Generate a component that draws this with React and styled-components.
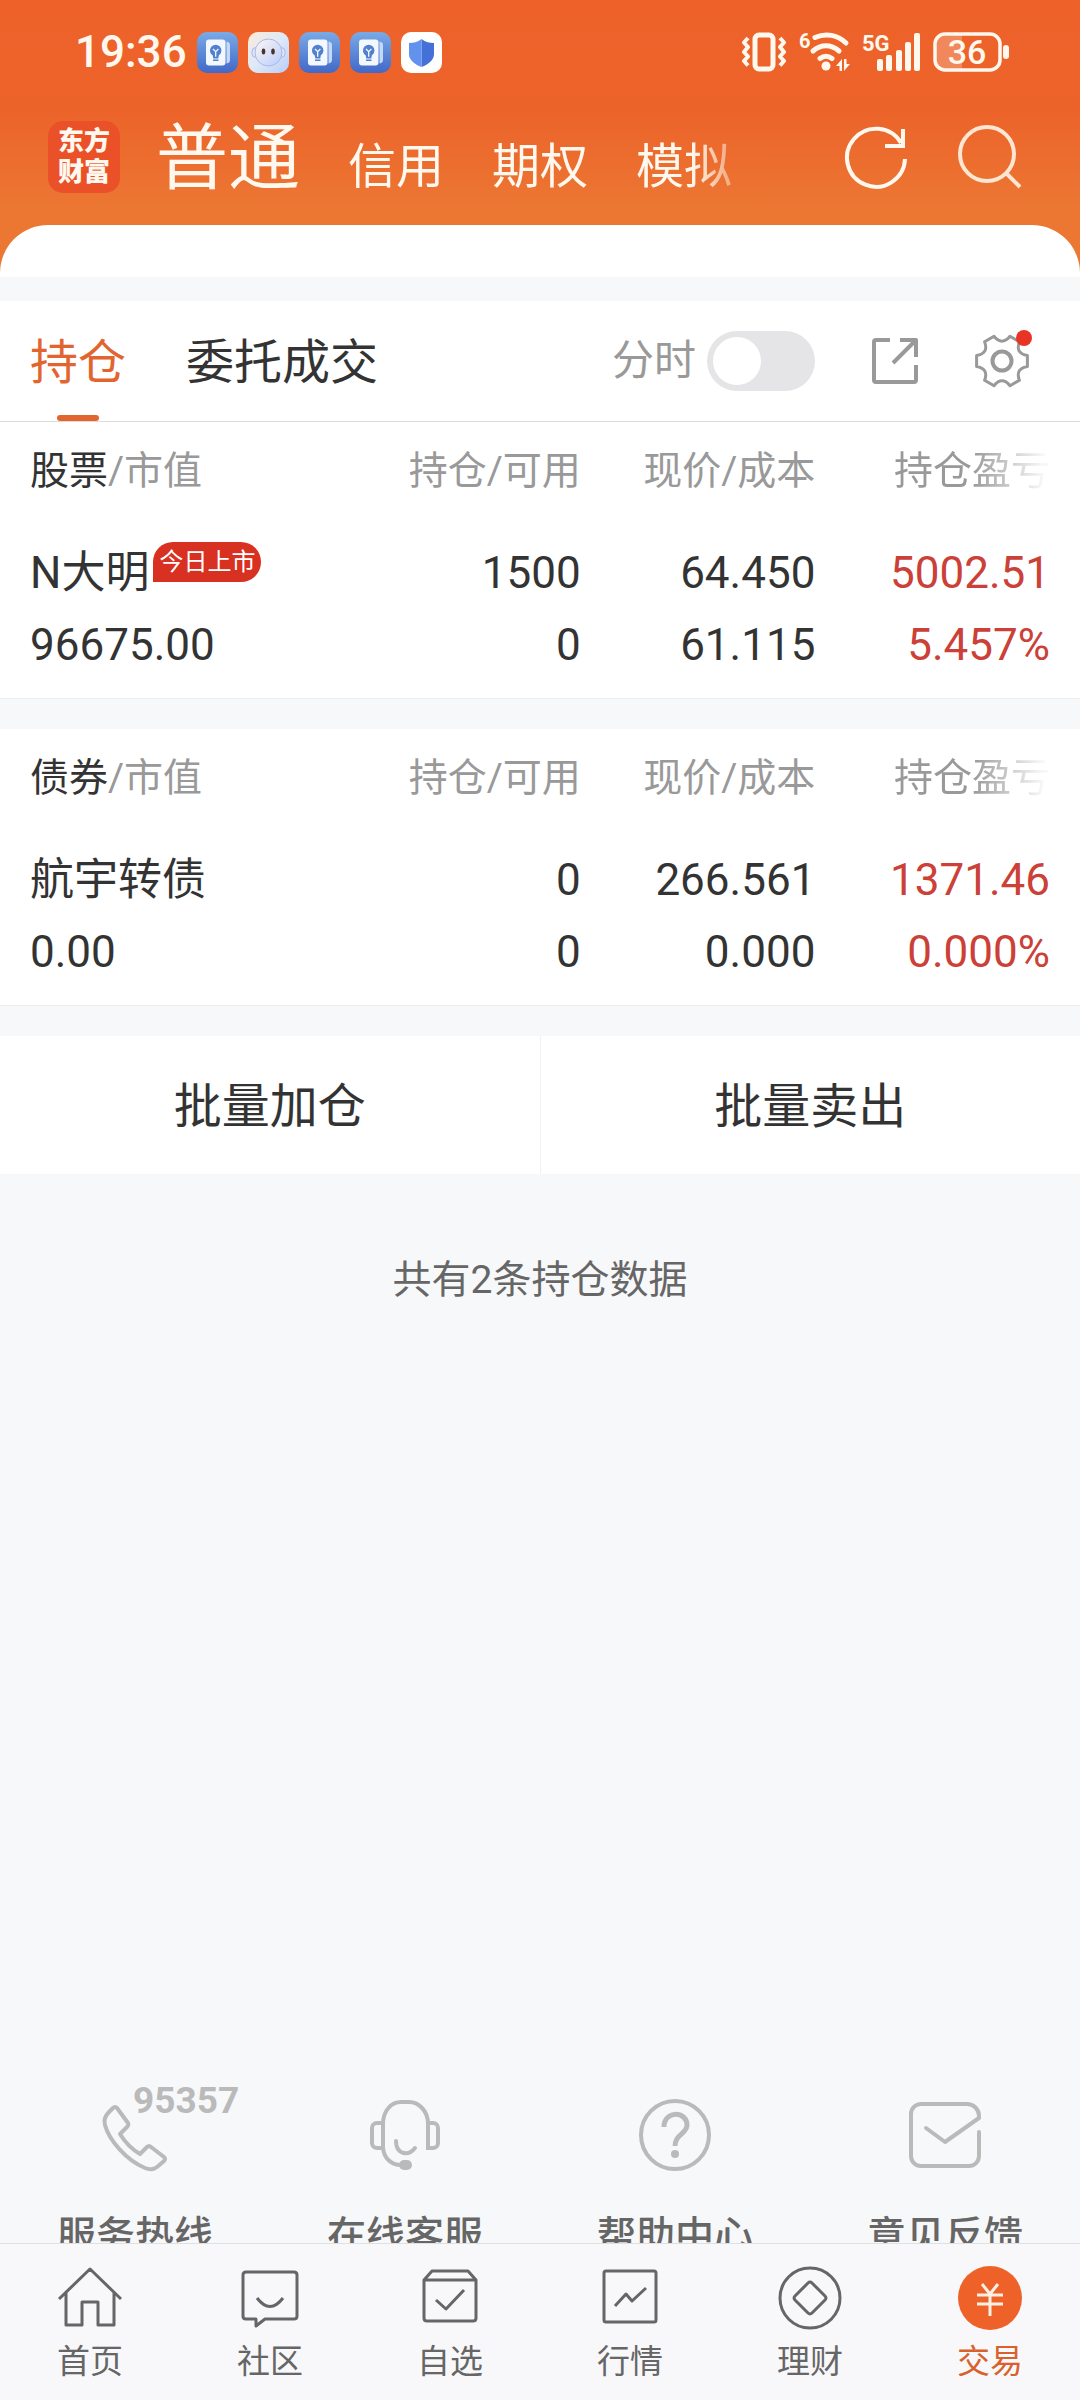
import React, { useState } from 'react';
import styled, { createGlobalStyle } from 'styled-components';

const GlobalStyle = createGlobalStyle`
  * {
    box-sizing: border-box;
  }

  body {
    margin: 0;
    background: #f7f8fa;
    color: #333;
    font-family: Roboto, 'Noto Sans CJK SC', sans-serif;
  }

  button {
    padding: 0;
    border: none;
    background: none;
    color: inherit;
    font-family: inherit;
    cursor: pointer;
  }

  a {
    color: inherit;
    text-decoration: none;
  }

  svg {
    display: block;
    flex: none;
    overflow: visible;
  }
`;

const Page = styled.div`
  display: flex;
  flex-direction: column;
  height: 100vh;
`;

const Header = styled.header`
  flex: none;
  background: linear-gradient(180deg, #ee622a 0, #ec632a 110px, #ec7733 210px, #ec7733 100%);
  color: #fff8ee;
`;

const StatusBar = styled.div`
  display: flex;
  align-items: center;
  justify-content: space-between;
  height: 104px;
  padding: 0 71px 0 75px;
`;

const StatusGroup = styled.div`
  display: flex;
  align-items: center;
  gap: ${({ $gap }) => $gap}px;
`;

const Clock = styled.time`
  font-size: 44px;
  font-weight: 500;
  line-height: 52px;
`;

const TitleBar = styled.div`
  display: flex;
  align-items: center;
  height: 106px;
  padding: 0 60px 0 48px;
`;

const Logo = styled.div`
  flex: none;
  display: grid;
  place-content: center;
  width: 72px;
  height: 72px;
  border-radius: 15px;
  background: #ea5128;
  font-size: 26px;
  font-weight: 900;
  line-height: 31px;
`;

const AccountNav = styled.nav`
  display: flex;
  align-items: baseline;
  gap: 48px;
  margin-left: 36px;
  margin-right: auto;
  padding-top: 12px;
  mask-image: linear-gradient(90deg, #000 93%, rgba(0, 0, 0, 0.4) 100%);
`;

const AccountLink = styled.a`
  font-size: ${({ $active }) => ($active ? 72 : 48)}px;
  line-height: 92px;
  white-space: nowrap;
`;

const HeaderActions = styled.div`
  display: flex;
  gap: 48px;
`;

const Sheet = styled.div`
  height: 52px;
  margin-top: 15px;
  border-radius: 48px 48px 0 0;
  background: #fff;
`;

const Content = styled.main`
  flex: 1;
  min-height: 0;
  padding-top: 24px;
  overflow-y: auto;
  scrollbar-width: none;
`;

const Toolbar = styled.div`
  display: flex;
  align-items: center;
  height: 121px;
  padding: 0 51px 0 30px;
  border-bottom: 1px solid #dcdcdc;
  background: #fff;
`;

const Tabs = styled.div`
  display: flex;
  align-self: stretch;
  gap: 60px;
  margin-right: auto;
`;

const Tab = styled.button`
  display: flex;
  flex-direction: column;
  align-items: center;
  justify-content: space-between;
  padding-top: 26px;
  color: ${({ $active }) => ($active ? '#e2652f' : '#333')};
  font-size: 48px;
  line-height: 72px;

  &::after {
    content: '';
    width: 42px;
    height: 6px;
    border-radius: 3px;
    background: ${({ $active }) => ($active ? '#e2652f' : 'transparent')};
  }
`;

const SwitchLabel = styled.label`
  display: flex;
  align-items: center;
  gap: 11px;
  color: #999;
  font-size: 42px;
  line-height: 60px;
`;

const Switch = styled.input`
  appearance: none;
  display: flex;
  width: 108px;
  height: 60px;
  margin: 0;
  padding: 6px;
  border-radius: 30px;
  background: #e5e5e7;
  cursor: pointer;

  &::before {
    content: '';
    width: 48px;
    height: 48px;
    border-radius: 50%;
    background: #fff;
  }

  &:checked {
    justify-content: flex-end;
    background: #ee622a;
  }
`;

const ToolButton = styled.button`
  position: relative;
  margin-left: 57px;
  color: #999;
`;

const RedDot = styled.span`
  position: absolute;
  top: -4px;
  right: -3px;
  width: 16px;
  height: 16px;
  border-radius: 50%;
  background: #e93326;
`;

const Card = styled.section`
  margin-bottom: 30px;
  padding: 0 30px;
  border-bottom: 1px solid #ebedf0;
  background: #fff;
`;

const Table = styled.table`
  width: 100%;
  border-collapse: collapse;
  table-layout: fixed;
`;

const HeadCell = styled.th`
  width: ${({ $first }) => ($first ? 31 : 23)}%;
  height: 96px;
  padding: 2px 0 0;
  color: #999;
  font-size: 39px;
  font-weight: 400;
  line-height: 48px;
  text-align: ${({ $first }) => ($first ? 'left' : 'right')};
  white-space: nowrap;
`;

const Strong = styled.span`
  color: #333;
`;

const Faded = styled.span`
  mask-image: linear-gradient(90deg, #000 50%, rgba(0, 0, 0, 0.08) 95%);
`;

const Cell = styled.td`
  padding: 19px 0 17px;
  color: ${({ $up }) => ($up ? '#cb4037' : '#333')};
  font-size: 44px;
  line-height: 72px;
  text-align: ${({ $first }) => ($first ? 'left' : 'right')};
  white-space: nowrap;
`;

const Name = styled.div`
  display: flex;
  align-items: flex-start;
  gap: 4px;
`;

const Badge = styled.span`
  margin-top: 5px;
  padding: 0 6px;
  border-radius: 20px 20px 20px 0;
  background: #d83021;
  color: #fff;
  font-size: 24px;
  line-height: 40px;
`;

const BatchActions = styled.div`
  display: flex;
  background: #fff;
`;

const BatchButton = styled.button`
  flex: 1;
  height: 138px;
  padding-top: 3px;
  font-size: 48px;
  line-height: 72px;

  & + & {
    border-left: 1px solid #f2f2f4;
  }
`;

const Summary = styled.p`
  margin: 82px 0 795px;
  color: #666;
  font-size: 39px;
  line-height: 48px;
  text-align: center;
`;

const Services = styled.div`
  display: grid;
  grid-template-columns: repeat(4, 1fr);
  padding-bottom: 60px;
`;

const Service = styled.a`
  display: flex;
  flex-direction: column;
  align-items: center;
  gap: 41px;
  color: #666;
  font-size: 39px;
  font-weight: 500;
  line-height: 48px;
`;

const ServiceIcon = styled.span`
  position: relative;
  color: #bababa;
`;

const Hotline = styled.span`
  position: absolute;
  top: -18px;
  left: 34px;
  font-size: 37px;
  font-weight: 700;
  line-height: 40px;
`;

const BottomNav = styled.nav`
  flex: none;
  display: grid;
  grid-template-columns: repeat(6, 1fr);
  padding: 22px 0 18px;
  border-top: 1px solid #e0e0e2;
  background: #f8f8fa;
`;

const BottomLink = styled.a`
  display: flex;
  flex-direction: column;
  align-items: center;
  gap: 12px;
  color: ${({ $active }) => ($active ? '#d9622c' : '#666')};
  font-size: 33px;
  line-height: 40px;
`;

const Line = ({ size = 64, width = 3, children, ...rest }) => (
  <svg
    width={size}
    height={size}
    viewBox={`0 0 ${size} ${size}`}
    fill="none"
    stroke="currentColor"
    strokeWidth={width}
    strokeLinejoin="round"
    aria-hidden="true"
    {...rest}
  >
    {children}
  </svg>
);

const NoteAppIcon = ({ id }) => (
  <svg width="41" height="41" viewBox="0 0 41 41" aria-hidden="true">
    <defs>
      <linearGradient id={id} x1="0" y1="0" x2="0" y2="1">
        <stop offset="0" stopColor="#7aaae6" />
        <stop offset="1" stopColor="#4168c8" />
      </linearGradient>
    </defs>
    <rect width="41" height="41" rx="10" fill={`url(#${id})`} />
    <rect x="9" y="7.500" width="19.500" height="26" rx="3" fill="#f3f8ff" />
    <path d="M29.500 9.500c2.500.5 3.500 1.500 3.500 3.500v15c0 2-1 3-3.500 3.500z" fill="#c5d8f5" />
    <circle cx="18.700" cy="18.500" r="5.700" fill="#5180ce" />
    <path d="M15.500 22h6.500l-.7 4.500h-5zM16 27.500h5.500v1.500H16z" fill="#5180ce" />
    <path d="M16 17l2.700 2.700 2.700-2.700M18.700 19.700v5" fill="none" stroke="#f3f8ff" strokeWidth="1.300" />
  </svg>
);

const BotAppIcon = () => (
  <svg width="41" height="41" viewBox="0 0 41 41" aria-hidden="true">
    <defs>
      <linearGradient id="botBg" x1="0" y1="0" x2="1" y2="1">
        <stop offset="0" stopColor="#fdebd9" />
        <stop offset="0.5" stopColor="#dde9f8" />
        <stop offset="1" stopColor="#b8ccfa" />
      </linearGradient>
      <linearGradient id="botFace" x1="0" y1="0" x2="1" y2="1">
        <stop offset="0" stopColor="#fff6f2" />
        <stop offset="1" stopColor="#b9cdfd" />
      </linearGradient>
    </defs>
    <rect width="41" height="41" rx="10" fill="url(#botBg)" />
    <rect x="4" y="15.500" width="33" height="10" rx="4" fill="#dde6fb" stroke="#a9b7e8" strokeWidth="1" />
    <circle cx="20.500" cy="20.500" r="13.500" fill="url(#botFace)" stroke="#a9b7e8" strokeWidth="1" />
    <ellipse cx="15.500" cy="19.500" rx="1.800" ry="3" fill="#46332e" />
    <ellipse cx="25" cy="19.500" rx="1.800" ry="3" fill="#46332e" />
  </svg>
);

const ShieldAppIcon = () => (
  <svg width="41" height="41" viewBox="0 0 41 41" aria-hidden="true">
    <rect width="41" height="41" rx="10" fill="#fff" />
    <path d="M20.500 7c4 3 8 4 12.500 4v11c0 6-5.500 10.500-12.500 13z" fill="#4570d8" />
    <path d="M20.500 7c-4 3-8 4-12.500 4v11c0 6 5.500 10.500 12.500 13z" fill="#6392ee" />
  </svg>
);

const VibrateIcon = () => (
  <svg width="46" height="40" viewBox="0 0 46 40" fill="none" stroke="currentColor" strokeLinejoin="round" aria-hidden="true">
    <rect x="14" y="3" width="18" height="34" rx="4" strokeWidth="5" />
    <path d="M7 6L3 10.500 7 15 3 20l4 4.500L3 29l4 4.500M39 6l4 4.500L39 15l4 5-4 4.500 4 4.500-4 4.500" strokeWidth="4" />
  </svg>
);

const WifiIcon = () => (
  <svg width="52" height="42" viewBox="0 0 52 42" aria-hidden="true">
    <text x="0" y="17" fill="currentColor" fontSize="20" fontWeight="700">6</text>
    <g fill="none" stroke="currentColor" strokeWidth="5" strokeLinecap="round">
      <path d="M16 6.500C27 1.500 39 4 47 12" />
      <path d="M14 20c8-7 18-7 26 0" />
      <path d="M21 27.500c4-3 8-3 12 0" />
    </g>
    <circle cx="27" cy="35" r="4.500" fill="currentColor" />
    <path d="M37 35l6-7v12h-2.500v-5zM51 33l-6 7V28h2.500v5z" fill="currentColor" />
  </svg>
);

const SignalIcon = () => (
  <svg width="58" height="40" viewBox="0 0 58 40" fill="currentColor" aria-hidden="true">
    <text x="-1" y="19" fontSize="22" fontWeight="700">5G</text>
    <rect x="14" y="27" width="6" height="12" rx="2" />
    <rect x="23" y="23" width="6" height="16" rx="2" />
    <rect x="33" y="18" width="6" height="21" rx="2" />
    <rect x="42" y="10" width="6" height="29" rx="2" />
    <rect x="51" y="1" width="6" height="38" rx="2" />
  </svg>
);

const BatteryIcon = () => (
  <svg width="76" height="40" viewBox="0 0 76 40" aria-hidden="true">
    <path d="M12 3h17v34H12a9 9 0 0 1-9-9V12a9 9 0 0 1 9-9z" fill="currentColor" opacity="0.25" />
    <rect x="2" y="2" width="65" height="36" rx="10" fill="none" stroke="currentColor" strokeWidth="3.500" />
    <rect x="70" y="13" width="6" height="14" rx="3" fill="currentColor" />
    <text x="34" y="32" fill="currentColor" fontSize="34" fontWeight="500" textAnchor="middle">36</text>
  </svg>
);

// Six-lobed cog outline: each lobe is a short flat edge, joined by concave curves.
const cogPath = (() => {
  const at = (r, deg) => {
    const a = (deg * Math.PI) / 180;
    return `${(27 + r * Math.cos(a)).toFixed(1)} ${(27 + r * Math.sin(a)).toFixed(1)}`;
  };
  let d = `M${at(26, -12)}`;
  for (let i = 0; i < 6; i += 1) {
    const deg = i * 60;
    d += `L${at(26, deg + 12)}Q${at(15, deg + 30)} ${at(26, deg + 48)}`;
  }
  return `${d}Z`;
})();

const accounts = ['普通', '信用', '期权', '模拟'];

const holdings = [
  {
    type: '股票',
    name: 'N大明',
    badge: '今日上市',
    value: '96675.00',
    cells: [
      ['1500', '0'],
      ['64.450', '61.115'],
      ['5002.51', '5.457%'],
    ],
  },
  {
    type: '债券',
    name: '航宇转债',
    value: '0.00',
    cells: [
      ['0', '0'],
      ['266.561', '0.000'],
      ['1371.46', '0.000%'],
    ],
  },
];

const services = [
  {
    label: '服务热线',
    hotline: '95357',
    icon: (
      <path d="M18 9L29 24q1 2-1 4l-7 7q8 13 20 20l7-7q2-2 4 0l13 10q2 2 0 4l-7 6q-5 4-12 1C27 61 10 41 6 26q-2-7 4-13l4-4q2-2 4 0z" />
    ),
  },
  {
    label: '在线客服',
    icon: (
      <>
        <path d="M14 51V25C14 11 23 3 32 3h8c9 0 19 8 19 22v26" />
        <path d="M14 24H8a5 5 0 0 0-5 5v15a5 5 0 0 0 5 5h6M59 24h5a5 5 0 0 1 5 5v15a5 5 0 0 1-5 5h-5" />
        <path d="M14 49c1 10 8 17 18 17M27 42c0 13 12 16 19 7" strokeLinecap="round" />
        <rect x="30" y="61" width="13" height="10" rx="5" fill="currentColor" stroke="none" />
      </>
    ),
  },
  {
    label: '帮助中心',
    icon: (
      <>
        <circle cx="36" cy="36" r="34" />
        <path d="M25 28c0-17 23-16 23-2 0 9-12 9-12 21" strokeWidth="5" />
        <circle cx="36" cy="55" r="4" fill="currentColor" stroke="none" />
      </>
    ),
  },
  {
    label: '意见反馈',
    icon: (
      <path
        d="M70 33v24a10 10 0 0 1-10 10H12A10 10 0 0 1 2 57V15A10 10 0 0 1 12 5h46a12 12 0 0 1 12 12v2L36 43 17 29"
        strokeLinecap="round"
      />
    ),
  },
];

const bottomTabs = [
  { label: '首页', icon: <path d="M1 33L32 3l31 30M8 27v32h16V36h16v23h16V27" /> },
  {
    label: '社区',
    icon: <path d="M8 6h48q3 0 3 3v41q0 3-3 3H27l-9 7v-7H8q-3 0-3-3V9q0-3 3-3zM19 32q13 17 26 0" />,
  },
  {
    label: '自选',
    icon: <path d="M6 14l8-9h36l8 9v38q0 3-3 3H9q-3 0-3-3zH58M18 34l10 9 18-19" />,
  },
  {
    label: '行情',
    icon: <path d="M8 5h48q2 0 2 2v47q0 2-2 2H8q-2 0-2-2V7q0-2 2-2zM17 40l11-12 6 7 14-13" />,
  },
  {
    label: '理财',
    icon: (
      <>
        <circle cx="32" cy="32" r="30" />
        <path d="M30 17q2-2 4 0l13 13q2 2 0 4L34 47q-2 2-4 0L17 34q-2-2 0-4z" />
      </>
    ),
  },
  {
    label: '交易',
    active: true,
    icon: (
      <>
        <circle cx="32" cy="32" r="32" fill="#ee622a" stroke="none" />
        <path d="M24 18l8 10 8-10M32 28v22M19 29h26M19 38h26" stroke="#fdf0e4" />
      </>
    ),
  },
];

const Holding = ({ item }) => (
  <Card>
    <Table>
      <thead>
        <tr>
          <HeadCell $first>
            <Strong>{item.type}</Strong>/市值
          </HeadCell>
          <HeadCell>持仓/可用</HeadCell>
          <HeadCell>现价/成本</HeadCell>
          <HeadCell>
            <Faded>持仓盈亏</Faded>
          </HeadCell>
        </tr>
      </thead>
      <tbody>
        <tr>
          <Cell $first>
            <Name>
              {item.name}
              {item.badge && <Badge>{item.badge}</Badge>}
            </Name>
            <div>{item.value}</div>
          </Cell>
          {item.cells.map(([top, bottom], i) => (
            <Cell key={i} $up={i === 2}>
              <div>{top}</div>
              <div>{bottom}</div>
            </Cell>
          ))}
        </tr>
      </tbody>
    </Table>
  </Card>
);

const App = () => {
  const [tab, setTab] = useState('持仓');
  const [live, setLive] = useState(false);

  return (
    <Page>
      <GlobalStyle />
      <Header>
        <StatusBar>
          <StatusGroup $gap={10}>
            <Clock>19:36</Clock>
            <NoteAppIcon id="note1" />
            <BotAppIcon />
            <NoteAppIcon id="note2" />
            <NoteAppIcon id="note3" />
            <ShieldAppIcon />
          </StatusGroup>
          <StatusGroup $gap={12}>
            <VibrateIcon />
            <WifiIcon />
            <SignalIcon />
            <BatteryIcon />
          </StatusGroup>
        </StatusBar>
        <TitleBar>
          <Logo>
            <span>东方</span>
            <span>财富</span>
          </Logo>
          <AccountNav>
            {accounts.map((name, i) => (
              <AccountLink key={name} href="#" $active={i === 0}>
                {name}
              </AccountLink>
            ))}
          </AccountNav>
          <HeaderActions>
            <button type="button" aria-label="刷新">
              <Line width={4} strokeLinejoin="miter">
                <path d="M61 34A29 29 0 1 1 57 18M59 4v17H41" />
              </Line>
            </button>
            <button type="button" aria-label="搜索">
              <Line width={4} stroke="#ffe6d2">
                <circle cx="31" cy="29" r="27" />
                <path d="M50 48l14 14" />
              </Line>
            </button>
          </HeaderActions>
        </TitleBar>
        <Sheet />
      </Header>

      <Content>
        <Toolbar>
          <Tabs>
            {['持仓', '委托成交'].map((name) => (
              <Tab key={name} type="button" $active={tab === name} onClick={() => setTab(name)}>
                {name}
              </Tab>
            ))}
          </Tabs>
          <SwitchLabel>
            分时
            <Switch type="checkbox" checked={live} onChange={(e) => setLive(e.target.checked)} />
          </SwitchLabel>
          <ToolButton type="button" aria-label="分享">
            <Line size={46} width={4}>
              <path d="M18 2H4q-2 0-2 2v38q0 2 2 2h38q2 0 2-2V27M28 2h16v17M44 2L21 25" />
            </Line>
          </ToolButton>
          <ToolButton type="button" aria-label="设置">
            <Line size={54}>
              <path d={cogPath} />
              <circle cx="27" cy="27" r="9.500" strokeWidth="4" />
            </Line>
            <RedDot />
          </ToolButton>
        </Toolbar>

        {holdings.map((item) => (
          <Holding key={item.type} item={item} />
        ))}

        <BatchActions>
          <BatchButton type="button">批量加仓</BatchButton>
          <BatchButton type="button">批量卖出</BatchButton>
        </BatchActions>

        <Summary>共有2条持仓数据</Summary>

        <Services>
          {services.map((item) => (
            <Service key={item.label} href="#">
              <ServiceIcon>
                <Line size={72} width={4}>
                  {item.icon}
                </Line>
                {item.hotline && <Hotline>{item.hotline}</Hotline>}
              </ServiceIcon>
              {item.label}
            </Service>
          ))}
        </Services>
      </Content>

      <BottomNav>
        {bottomTabs.map((item) => (
          <BottomLink key={item.label} href="#" $active={item.active}>
            <Line>{item.icon}</Line>
            {item.label}
          </BottomLink>
        ))}
      </BottomNav>
    </Page>
  );
};

export default App;
